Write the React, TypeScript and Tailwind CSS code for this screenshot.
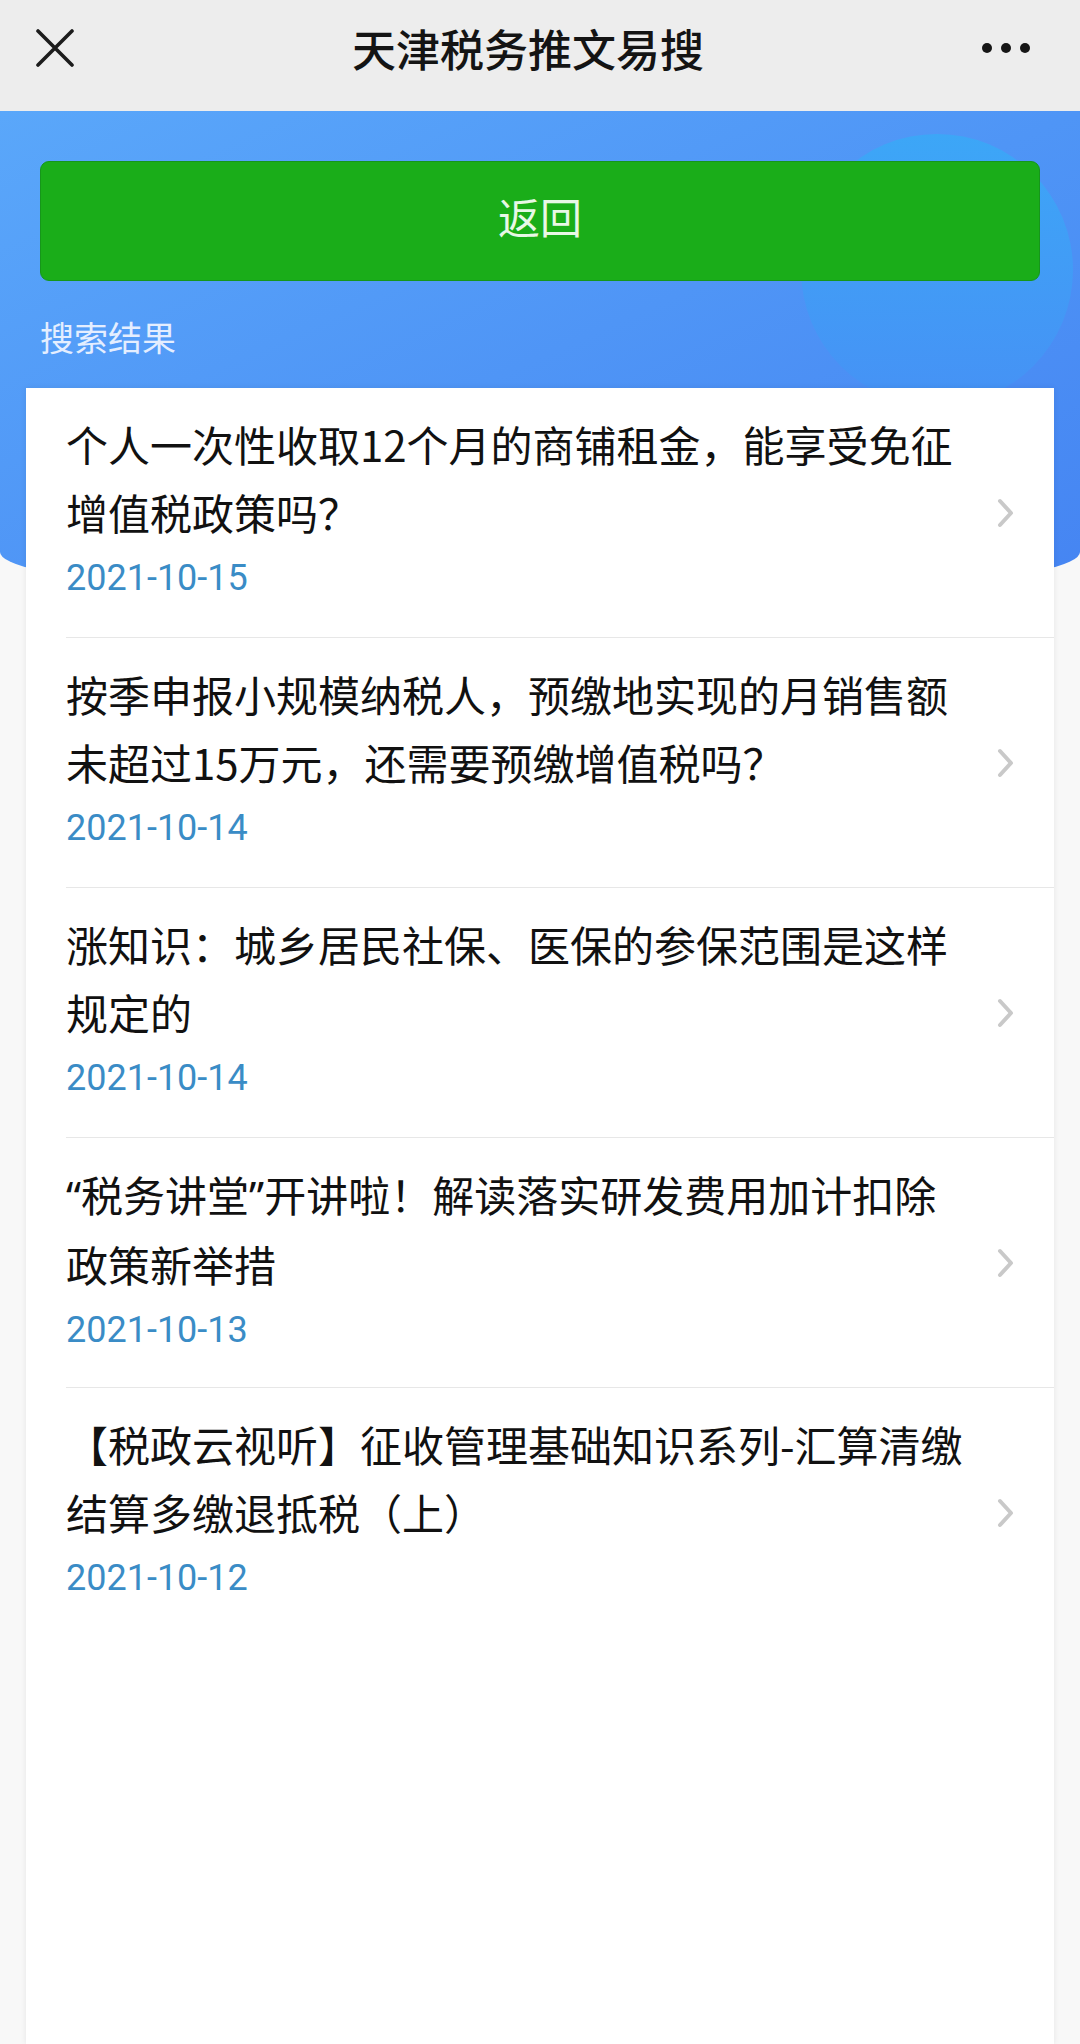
import React from 'react';

interface Article {
  lines: React.ReactNode[];
  date: string;
}

const Q = ({ children }: { children: string }) => (
  <span className="font-['Noto_Sans',sans-serif]">{children}</span>
);

const ARTICLES: Article[] = [
  { lines: ['个人一次性收取12个月的商铺租金，能享受免征', '增值税政策吗？'], date: '2021-10-15' },
  { lines: ['按季申报小规模纳税人，预缴地实现的月销售额', '未超过15万元，还需要预缴增值税吗？'], date: '2021-10-14' },
  { lines: ['涨知识：城乡居民社保、医保的参保范围是这样', '规定的'], date: '2021-10-14' },
  {
    lines: [
      <>
        <Q>“</Q>税务讲堂<Q>”</Q>开讲啦！解读落实研发费用加计扣除
      </>,
      '政策新举措',
    ],
    date: '2021-10-13',
  },
  { lines: ['【税政云视听】征收管理基础知识系列-汇算清缴', '结算多缴退抵税（上）'], date: '2021-10-12' },
];

const CJK = "font-['Noto_Sans_CJK_SC','Noto_Sans',sans-serif]";

function Chevron() {
  return (
    <svg width="20" height="30" viewBox="0 0 20 30" className="shrink-0">
      <path d="M4 3 L15 15 L4 27" fill="none" stroke="#c9c9c9" strokeWidth="4" strokeLinecap="round" strokeLinejoin="round" />
    </svg>
  );
}

export default function App() {
  return (
    <div className={`min-h-[2044px] w-[1080px] bg-[#f8f8f8] ${CJK}`}>
      {/* Top bar */}
      <div className="h-[111px] bg-[#ededed]">
        <div className="flex h-[96px] items-center justify-between pl-[36px] pr-[50px]">
          <svg width="38" height="38" viewBox="0 0 38 38">
            <path d="M2 2 L36 36 M36 2 L2 36" stroke="#1c1c1c" strokeWidth="3.6" strokeLinecap="round" />
          </svg>
          <div className="text-[44px] font-medium leading-none text-[#141414]">天津税务推文易搜</div>
          <div className="flex items-center gap-[9px]">
            <span className="h-[10px] w-[10px] rounded-full bg-[#161616]" />
            <span className="h-[10px] w-[10px] rounded-full bg-[#161616]" />
            <span className="h-[10px] w-[10px] rounded-full bg-[#161616]" />
          </div>
        </div>
      </div>

      {/* Blue banner */}
      <div className="relative h-[491px] overflow-hidden rounded-b-[540px_50px] bg-gradient-to-br from-[#5aa7fa] via-[#4f95f6] to-[#4584f2] px-[40px] pt-[50px]">
        <div className="absolute left-[801px] top-[23px] h-[272px] w-[272px] rounded-full bg-gradient-to-b from-[#3aa8f7] to-[#4592f5] opacity-90" />
        <button className="relative flex h-[120px] w-full items-center justify-center rounded-[9px] border border-[#16961a] bg-[#1aad19] pb-[12px] text-[42px] text-[#e8f8e6]">
          返回
        </button>
        <div className="relative mt-[32px] text-[34px] leading-[48px] text-[#e4eeff]">搜索结果</div>
      </div>

      {/* Results */}
      <div className="relative mx-[26px] -mt-[214px] min-h-[1656px] bg-white shadow-[0_0_6px_rgba(0,0,0,0.08)]">
        {ARTICLES.map((a, i) => (
          <div key={a.date + i} className="pl-[40px]">
            <div
              className={`flex h-[250px] items-center pr-[38px] ${i < ARTICLES.length - 1 ? 'border-b border-[#e7e7e7]' : ''}`}
            >
              <div className="flex-1 self-start pt-[22px]">
                <div className="text-[42px] leading-[68px] text-[#111]">
                  {a.lines.map((l, j) => (
                    <div key={j} className="whitespace-nowrap">{l}</div>
                  ))}
                </div>
                <div className="mt-[8px] font-['Roboto',sans-serif] text-[36px] leading-[48px] text-[#3a8cc6]">{a.date}</div>
              </div>
              <Chevron />
            </div>
          </div>
        ))}
      </div>
    </div>
  );
}
